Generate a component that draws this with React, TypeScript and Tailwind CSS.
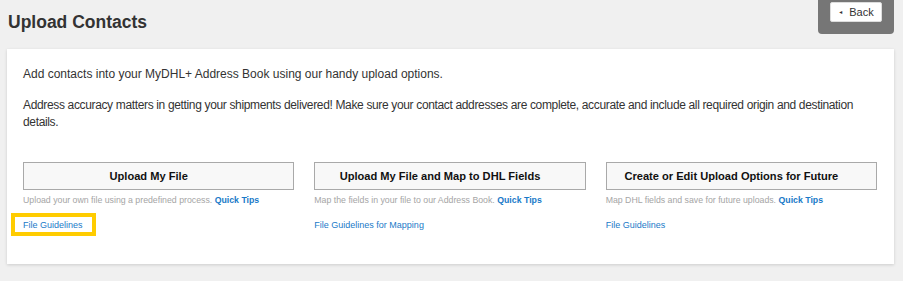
import React from 'react';

type Option = {
  title: string;
  desc: string;
  link: string;
  highlight?: boolean;
};

const OPTIONS: Option[] = [
  {
    title: 'Upload My File',
    desc: 'Upload your own file using a predefined process.',
    link: 'File Guidelines',
    highlight: true,
  },
  {
    title: 'Upload My File and Map to DHL Fields',
    desc: 'Map the fields in your file to our Address Book.',
    link: 'File Guidelines for Mapping',
  },
  {
    title: 'Create or Edit Upload Options for Future',
    desc: 'Map DHL fields and save for future uploads.',
    link: 'File Guidelines',
  },
];

export default function App() {
  return (
    <div className="min-h-[281px] bg-[#f0f0f0] font-['Liberation_Sans',Arial,sans-serif] text-[#333]">
      {/* Header */}
      <div className="flex h-[49px] items-start justify-between">
        <h1 className="pl-[8px] pt-[11px] text-[17.5px] font-bold leading-[22px] text-[#333]">
          Upload Contacts
        </h1>
        <div className="mr-[9px] rounded-b-[4px] bg-[#767676] px-[12px] pb-[12px] pt-[2px]">
          <button
            type="button"
            className="flex h-[20px] w-[52px] items-center justify-center gap-[6px] rounded-[2px] border border-[#ddd] bg-white text-[11px] text-[#333]"
          >
            <span className="text-[5px] leading-none">◄</span>
            <span>Back</span>
          </button>
        </div>
      </div>

      {/* Card */}
      <section className="ml-[7px] mr-[9px] bg-white px-[16px] pb-[33px] pt-[17px] shadow-[0_1px_3px_rgba(0,0,0,0.15)]">
        <p className="text-[12px] leading-[17px]">
          Add contacts into your MyDHL+ Address Book using our handy upload options.
        </p>
        <p className="mt-[14px] text-[12px] leading-[17px] tracking-[-0.35px]">
          Address accuracy matters in getting your shipments delivered! Make sure your contact addresses are complete, accurate and include all required origin and destination details.
        </p>

        <div className="mt-[31px] grid grid-cols-3 gap-x-[20px] pr-[1px]">
          {OPTIONS.map((o) => (
            <div key={o.title}>
              <button
                type="button"
                className="h-[28px] w-full border border-[#a9a9a9] bg-[#f8f8f8] pr-[20px] text-center text-[11.1px] font-bold text-[#111]"
              >
                {o.title}
              </button>
              <p className="mt-[4px] text-[8.75px] leading-[12px] text-[#a5a5a5]">
                {o.desc} <a className="font-bold text-[#1a7ac8]">Quick Tips</a>
              </p>
              <div className="mt-[13px] text-[9px] leading-[12px]">
                <a className="relative text-[#1a7ac8]">
                  {o.link}
                  {o.highlight ? (
                    <span className="absolute -bottom-[6px] -left-[12px] -right-[13px] -top-[7px] border-4 border-[#ffcc00]" />
                  ) : null}
                </a>
              </div>
            </div>
          ))}
        </div>
      </section>
    </div>
  );
}
